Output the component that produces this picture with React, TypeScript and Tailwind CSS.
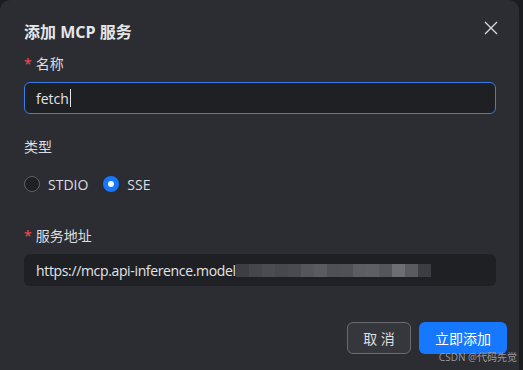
import React from "react";

const blur = [
  "#3d3e43", "#45464b", "#4b4c51", "#47484d", "#4a4b50", "#55565b", "#5a5b60", "#4f5055",
  "#505156", "#5c5d62", "#5e5f64", "#55565b", "#6d6e73", "#5a5b60", "#3c3d42",
];

export default function App() {
  return (
    <div
      className="w-[523px] h-[370px] bg-[#1b1c1f] overflow-hidden"
      style={{ fontFamily: '"Open Sans", "Noto Sans CJK SC", sans-serif' }}
    >
      <div className="relative w-[519px] h-[370px] bg-[#2c2d32] rounded-t-[10px] px-6 pt-[20px]">
        <div className="text-[16px] font-bold text-[#e5e6e8] leading-[24px]">添加 MCP 服务</div>
        <button className="absolute right-[20px] top-[20px] w-4 h-4 flex items-center justify-center text-[#d6d7d9]">
          <svg width="14" height="14" viewBox="0 0 14 14" fill="none" stroke="currentColor" strokeWidth="1.4">
            <path d="M1 1 L13 13 M13 1 L1 13" />
          </svg>
        </button>

        <div className="mt-[8px] flex items-center h-[22px] text-[14px] text-[#dcdde0]">
          <span className="text-[#ff4d4f] mr-[4px] text-[14px]">*</span>名称
        </div>
        <div className="mt-[8px] h-[32px] w-[472px] rounded-[6px] border border-[#3b7be6] bg-[#1f2024] flex items-center px-[11px] text-[14px] text-[#e3e4e6]">
          fetch<span className="inline-block w-px h-[18px] bg-[#e3e4e6] ml-[1px]" />
        </div>

        <div className="mt-[21px] h-[22px] flex items-center text-[14px] text-[#dcdde0]">类型</div>
        <div className="mt-[16px] flex items-center h-[22px] text-[14px] text-[#dcdde0]">
          <span className="w-4 h-4 rounded-full border border-[#5f6065] bg-[#1f2024]" />
          <span className="ml-[8px]">STDIO</span>
          <span className="ml-[15px] w-4 h-4 rounded-full bg-[#1677ff] flex items-center justify-center">
            <span className="w-[6px] h-[6px] rounded-full bg-white" />
          </span>
          <span className="ml-[8px]">SSE</span>
        </div>

        <div className="mt-[29px] flex items-center h-[22px] text-[14px] text-[#dcdde0]">
          <span className="text-[#ff4d4f] mr-[4px]">*</span>服务地址
        </div>
        <div className="mt-[8px] h-[32px] w-[472px] rounded-[6px] bg-[#1f2024] flex items-center px-[12px] text-[14px] text-[#e3e4e6]">
          <span className="tracking-[-0.35px]">https://mcp.api-inference.model</span>
          <span className="flex h-[13px]">
            {blur.map((c, i) => (
              <span key={i} className="w-[13px] h-[13px]" style={{ background: c }} />
            ))}
          </span>
        </div>

        <div className="mt-[36px] flex justify-end gap-2 mr-[-12px]">
          <button className="h-[32px] w-[64px] rounded-[6px] border border-[#6a6b70] bg-[#36373c] text-[14px] text-[#dcdde0]">
            取 消
          </button>
          <button className="h-[32px] w-[88px] rounded-[6px] bg-[#1677ff] text-[14px] text-white">
            立即添加
          </button>
        </div>
        <div className="absolute right-[2px] bottom-[8px] text-[10px] text-[#9a9ba0] leading-none">CSDN @代码先觉</div>
      </div>
    </div>
  );
}
